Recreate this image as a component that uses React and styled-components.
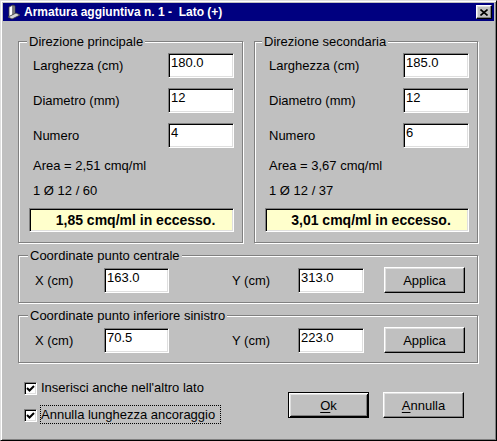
import React from 'react';
import styled, { createGlobalStyle } from 'styled-components';

const GlobalStyle = createGlobalStyle`
  html, body {
    margin: 0;
    padding: 0;
    background: #c0c0c0;
  }
  body {
    font-family: "Liberation Sans", Arial, sans-serif;
    font-size: 13px;
    color: #000;
  }
`;

const Window = styled.div`
  box-sizing: border-box;
  width: 497px;
  height: 441px;
  background: #c0c0c0;
  border: 1px solid;
  border-color: #dfdfdf #000 #000 #dfdfdf;
  box-shadow: inset 1px 1px #fff, inset -1px -1px #808080;
  padding: 2px;
  display: flex;
  flex-direction: column;
`;

const TitleBar = styled.div`
  height: 18px;
  background: #000080;
  display: flex;
  align-items: center;
  padding: 0 2px;
  color: #fff;
  font-weight: bold;
  font-size: 12px;
`;

const TitleText = styled.span`
  margin-left: 3px;
  flex: 1;
  white-space: pre;
`;

const CloseButton = styled.div`
  box-sizing: border-box;
  width: 16px;
  height: 14px;
  background: #c0c0c0;
  border: 1px solid;
  border-color: #fff #000 #000 #fff;
  box-shadow: inset -1px -1px #808080, inset 1px 1px #dfdfdf;
  display: flex;
  align-items: center;
  justify-content: center;
`;

const Body = styled.div`
  display: flex;
  flex-direction: column;
  gap: 12px;
  padding: 20px 0 0 15px;
`;

const TopRow = styled.div`
  display: flex;
  gap: 11px;
`;

const Group = styled.div`
  position: relative;
  box-sizing: border-box;
  width: ${p => p.$w}px;
  height: ${p => p.$h}px;
  border: 1px solid #808080;
  box-shadow: inset 1px 1px #fff, 1px 1px #fff;
`;

const GroupTitle = styled.span`
  position: absolute;
  top: -8px;
  left: ${p => p.$left}px;
  padding: 0 2px;
  line-height: 15px;
  background: #c0c0c0;
  white-space: nowrap;
`;

const DirBody = styled.div`
  display: flex;
  flex-direction: column;
  gap: 10px;
  padding: 11px 8px 10px 10px;
`;

const FieldRow = styled.div`
  display: flex;
  justify-content: space-between;
  align-items: center;
  height: 25px;
`;

const Label = styled.span`
  padding-left: ${p => p.$indent || 0}px;
  line-height: 15px;
  white-space: nowrap;
`;

const Field = styled.div`
  box-sizing: border-box;
  width: ${p => p.$w || 66}px;
  height: 25px;
  background: #fff;
  border: 1px solid;
  border-color: #808080 #fff #fff #808080;
  box-shadow: inset 1px 1px #000, inset -1px -1px #dfdfdf;
  padding: 1px 2px;
  line-height: 15px;
  align-self: ${p => p.$align || 'auto'};
`;

const InfoLine = styled.div`
  padding-left: 4px;
  line-height: 15px;
  height: 15px;
  white-space: nowrap;
`;

const ResultBox = styled.div`
  box-sizing: border-box;
  height: 24px;
  padding-left: 8px;
  background: #ffffcc;
  border: 1px solid;
  border-color: #808080 #fff #fff #808080;
  box-shadow: inset 1px 1px #000, inset -1px -1px #dfdfdf;
  display: flex;
  align-items: center;
  justify-content: center;
  font-weight: bold;
  font-size: 14px;
`;

const CoordRow = styled.div`
  display: grid;
  grid-template-columns: 69px 65px 63px 66px 66px 1fr;
  align-items: center;
  height: 26px;
  padding: 11px 12px 9px 16px;
`;

const Button = styled.button`
  box-sizing: border-box;
  width: 81px;
  height: 26px;
  padding: 0;
  background: #c0c0c0;
  color: #000;
  font: 13px "Liberation Sans", Arial, sans-serif;
  justify-self: end;
  border: 1px solid;
  border-color: ${p => (p.$default ? '#000' : '#fff #000 #000 #fff')};
  box-shadow: ${p =>
    p.$default
      ? 'inset 1px 1px #fff, inset -1px -1px #000, inset 2px 2px #dfdfdf, inset -2px -2px #808080'
      : 'inset -1px -1px #808080, inset 1px 1px #dfdfdf'};
  u {
    text-decoration: underline;
    text-underline-offset: 2px;
  }
`;

const BottomRow = styled.div`
  display: flex;
  align-items: flex-start;
  margin-top: 3px;
  padding-left: 6px;
`;

const Checks = styled.div`
  display: flex;
  flex-direction: column;
  gap: 8px;
`;

const CheckRow = styled.div`
  display: flex;
  align-items: center;
  height: 19px;
`;

const CheckBox = styled.div`
  box-sizing: border-box;
  width: 13px;
  height: 13px;
  margin: 2px 3px 0 0;
  background: #fff;
  border: 1px solid;
  border-color: #808080 #fff #fff #808080;
  box-shadow: inset 1px 1px #000, inset -1px -1px #dfdfdf;
  display: flex;
  align-items: center;
  justify-content: center;
`;

const CheckLabel = styled.span`
  border: 1px dotted ${p => (p.$focus ? '#000' : 'transparent')};
  padding: 1px 5px 1px 0;
  line-height: 15px;
  white-space: nowrap;
`;

const Buttons = styled.div`
  display: flex;
  gap: 14px;
  margin: 14px 30px 0 auto;
`;

const WallIcon = () => (
  <svg width="16" height="16" viewBox="0 0 16 16">
    <polygon points="4,3 8,1 8,11 4,13" fill="#ffffff" stroke="#404040" strokeWidth="0.8" />
    <polygon points="8,1 10,2 10,11 8,11" fill="#a0a0a0" stroke="#404040" strokeWidth="0.8" />
    <polygon points="3,13 11,9 15,11 7,15" fill="#d8d8d8" stroke="#404040" strokeWidth="0.8" />
  </svg>
);

const CloseGlyph = () => (
  <svg width="8" height="7" viewBox="0 0 8 7">
    <path d="M0.5 0.5 L7.5 6.5 M7.5 0.5 L0.5 6.5" stroke="#000" strokeWidth="1.6" />
  </svg>
);

const CheckGlyph = () => (
  <svg width="9" height="9" viewBox="0 0 9 9">
    <path d="M1 4 L3.5 6.5 L8 2" fill="none" stroke="#000" strokeWidth="2" />
  </svg>
);

const Direction = ({ title, titleLeft, width, larghezza, diametro, numero, area, bars, result }) => (
  <Group $w={width} $h={202}>
    <GroupTitle $left={titleLeft}>{title}</GroupTitle>
    <DirBody>
      <FieldRow>
        <Label $indent={4}>Larghezza (cm)</Label>
        <Field>{larghezza}</Field>
      </FieldRow>
      <FieldRow>
        <Label $indent={4}>Diametro (mm)</Label>
        <Field>{diametro}</Field>
      </FieldRow>
      <FieldRow>
        <Label $indent={4}>Numero</Label>
        <Field>{numero}</Field>
      </FieldRow>
      <InfoLine>Area = {area} cmq/ml</InfoLine>
      <InfoLine>{bars}</InfoLine>
      <ResultBox>{result}</ResultBox>
    </DirBody>
  </Group>
);

const Coordinates = ({ title, x, y }) => (
  <Group $w={460} $h={48}>
    <GroupTitle $left={9}>{title}</GroupTitle>
    <CoordRow>
      <Label>X (cm)</Label>
      <Field $w={65} $align="end">{x}</Field>
      <span />
      <Label>Y (cm)</Label>
      <Field $w={66} $align="end">{y}</Field>
      <Button>Applica</Button>
    </CoordRow>
  </Group>
);

export default function App() {
  return (
    <>
      <GlobalStyle />
      <Window>
        <TitleBar>
          <WallIcon />
          <TitleText>Armatura aggiuntiva n. 1 -  Lato (+)</TitleText>
          <CloseButton>
            <CloseGlyph />
          </CloseButton>
        </TitleBar>
        <Body>
          <TopRow>
            <Direction
              title="Direzione principale"
              titleLeft={8}
              width={225}
              larghezza="180.0"
              diametro="12"
              numero="4"
              area="2,51"
              bars="1 Ø 12 / 60"
              result="1,85 cmq/ml in eccesso."
            />
            <Direction
              title="Direzione secondaria"
              titleLeft={7}
              width={224}
              larghezza="185.0"
              diametro="12"
              numero="6"
              area="3,67"
              bars="1 Ø 12 / 37"
              result="3,01 cmq/ml in eccesso."
            />
          </TopRow>
          <Coordinates title="Coordinate punto centrale" x="163.0" y="313.0" />
          <Coordinates title="Coordinate punto inferiore sinistro" x="70.5" y="223.0" />
          <BottomRow>
            <Checks>
              <CheckRow>
                <CheckBox><CheckGlyph /></CheckBox>
                <CheckLabel>Inserisci anche nell'altro lato</CheckLabel>
              </CheckRow>
              <CheckRow>
                <CheckBox><CheckGlyph /></CheckBox>
                <CheckLabel $focus>Annulla lunghezza ancoraggio</CheckLabel>
              </CheckRow>
            </Checks>
            <Buttons>
              <Button $default><u>O</u>k</Button>
              <Button><u>A</u>nnulla</Button>
            </Buttons>
          </BottomRow>
        </Body>
      </Window>
    </>
  );
}
